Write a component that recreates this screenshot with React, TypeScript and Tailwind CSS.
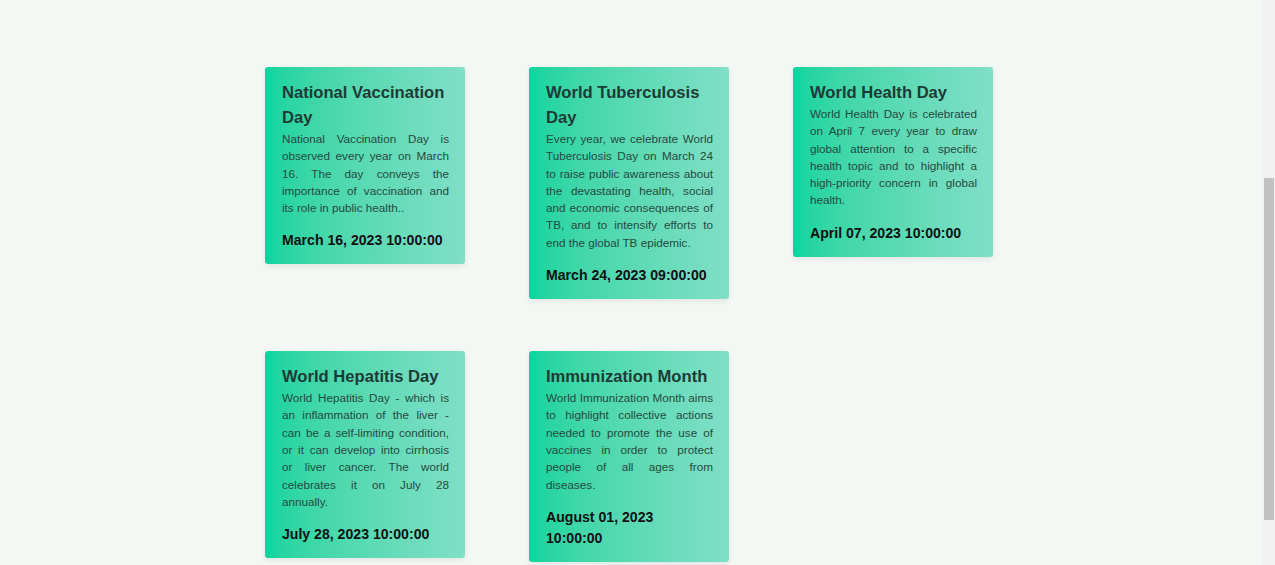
import React from "react";

type Event = {
  title: string;
  text: string;
  date: string;
};

const events: Event[] = [
  {
    title: "National Vaccination Day",
    text: "National Vaccination Day is observed every year on March 16. The day conveys the importance of vaccination and its role in public health..",
    date: "March 16, 2023 10:00:00",
  },
  {
    title: "World Tuberculosis Day",
    text: "Every year, we celebrate World Tuberculosis Day on March 24 to raise public awareness about the devastating health, social and economic consequences of TB, and to intensify efforts to end the global TB epidemic.",
    date: "March 24, 2023 09:00:00",
  },
  {
    title: "World Health Day",
    text: "World Health Day is celebrated on April 7 every year to draw global attention to a specific health topic and to highlight a high-priority concern in global health.",
    date: "April 07, 2023 10:00:00",
  },
  {
    title: "World Hepatitis Day",
    text: "World Hepatitis Day - which is an inflammation of the liver - can be a self-limiting condition, or it can develop into cirrhosis or liver cancer. The world celebrates it on July 28 annually.",
    date: "July 28, 2023 10:00:00",
  },
  {
    title: "Immunization Month",
    text: "World Immunization Month aims to highlight collective actions needed to promote the use of vaccines in order to protect people of all ages from diseases.",
    date: "August 01, 2023 10:00:00",
  },
];

const EventCard = ({ event }: { event: Event }) => (
  <div className="w-[200px] rounded-[3px] bg-linear-to-r from-[#08d49e] to-[#80dfc7] pl-[17px] pr-[16px] pt-[13px] pb-[13px] shadow-[0_2px_6px_rgba(0,0,0,0.08)]">
    <h3 className="text-[16.6px] leading-[25px] font-bold text-[#1d3b34]">
      {event.title}
    </h3>
    <p className="text-justify text-[11.7px] leading-[17.3px] text-[#264a40]">
      {event.text}
    </p>
    <p className="mt-[14px] text-[14.1px] leading-[21px] font-bold text-[#111]">
      {event.date}
    </p>
  </div>
);

const App = () => {
  return (
    <div
      className="flex h-[565px] w-full overflow-hidden bg-[#f3f8f5]"
      style={{ fontFamily: '"Liberation Sans", Arial, sans-serif' }}
    >
      <div className="flex-1">
        <div className="ml-[265px] mt-[67px] grid w-[728px] grid-cols-3 items-start gap-x-16 gap-y-[52px]">
          {events.map((event) => (
            <EventCard key={event.title} event={event} />
          ))}
        </div>
      </div>

      {/* scrollbar */}
      <div className="flex w-[13px] flex-col bg-[#f1f1f1] pl-[2px]">
        <div className="h-[178px]" />
        <div className="h-[342px] w-[10px] bg-[#c1c1c1]" />
      </div>
    </div>
  );
};

export default App;
